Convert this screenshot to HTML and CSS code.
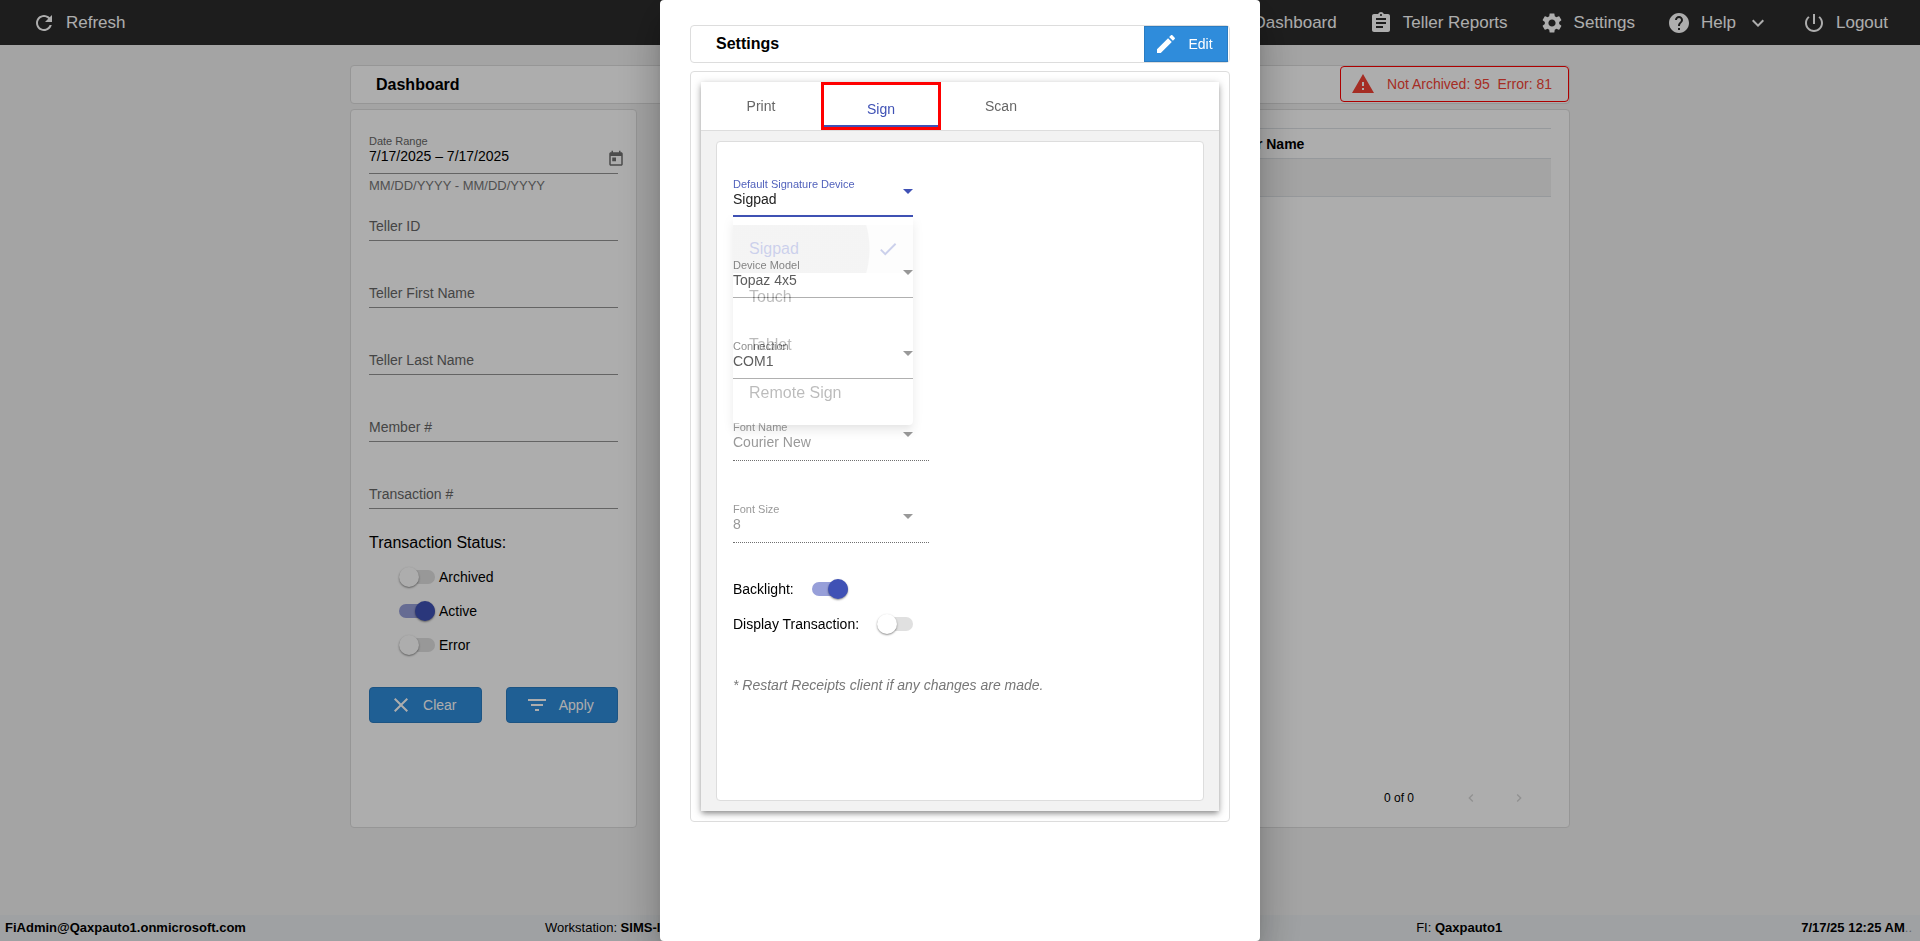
FILE: index.html
```html
<!DOCTYPE html>
<html lang="en">
<head>
<meta charset="utf-8">
<title>Receipts Dashboard</title>
<link rel="stylesheet" href="styles.css">
</head>
<body>
<div class="page">
  <header class="topbar">
    <button class="nav-item" type="button">
      <svg class="icon" viewBox="0 0 24 24"><path d="M17.65 6.35C16.2 4.9 14.21 4 12 4c-4.42 0-7.99 3.58-7.99 8s3.57 8 7.99 8c3.73 0 6.84-2.55 7.73-6h-2.08c-.82 2.33-3.04 4-5.65 4-3.31 0-6-2.69-6-6s2.69-6 6-6c1.66 0 3.14.69 4.22 1.78L13 11h7V4l-2.35 2.35z"/></svg>
      Refresh
    </button>
    <nav class="nav">
      <a class="nav-item" href="#">
        <svg class="icon" viewBox="0 0 24 24"><path d="M3 13h8V3H3v10zm0 8h8v-6H3v6zm10 0h8V11h-8v10zm0-18v6h8V3h-8z"/></svg>
        Dashboard
      </a>
      <a class="nav-item" href="#">
        <svg class="icon" viewBox="0 0 24 24"><path d="M19 3h-4.18C14.4 1.84 13.3 1 12 1c-1.3 0-2.4.84-2.82 2H5c-1.1 0-2 .9-2 2v14c0 1.1.9 2 2 2h14c1.1 0 2-.9 2-2V5c0-1.1-.9-2-2-2zm-7 0c.55 0 1 .45 1 1s-.45 1-1 1-1-.45-1-1 .45-1 1-1zm2 14H7v-2h7v2zm3-4H7v-2h10v2zm0-4H7V7h10v2z"/></svg>
        Teller Reports
      </a>
      <a class="nav-item" href="#">
        <svg class="icon" viewBox="0 0 24 24"><path d="M19.14 12.94c.04-.3.06-.61.06-.94 0-.32-.02-.64-.07-.94l2.03-1.58c.18-.14.23-.41.12-.61l-1.92-3.32c-.12-.22-.37-.29-.59-.22l-2.39.96c-.5-.38-1.03-.7-1.62-.94l-.36-2.54c-.04-.24-.24-.41-.48-.41h-3.84c-.24 0-.43.17-.47.41l-.36 2.54c-.59.24-1.13.57-1.62.94l-2.39-.96c-.22-.08-.47 0-.59.22L2.74 8.87c-.12.21-.08.47.12.61l2.03 1.58c-.05.3-.09.63-.09.94s.02.64.07.94l-2.03 1.58c-.18.14-.23.41-.12.61l1.92 3.32c.12.22.37.29.59.22l2.39-.96c.5.38 1.03.7 1.62.94l.36 2.54c.05.24.24.41.48.41h3.84c.24 0 .44-.17.47-.41l.36-2.54c.59-.24 1.13-.56 1.62-.94l2.39.96c.22.08.47 0 .59-.22l1.92-3.32c.12-.22.07-.47-.12-.61l-2.01-1.58zM12 15.6c-1.98 0-3.6-1.62-3.6-3.6s1.62-3.6 3.6-3.6 3.6 1.62 3.6 3.6-1.62 3.6-3.6 3.6z"/></svg>
        Settings
      </a>
      <button class="nav-item" type="button">
        <svg class="icon" viewBox="0 0 24 24"><path d="M12 2C6.48 2 2 6.48 2 12s4.48 10 10 10 10-4.48 10-10S17.52 2 12 2zm1 17h-2v-2h2v2zm2.07-7.75l-.9.92C13.45 12.9 13 13.5 13 15h-2v-.5c0-1.1.45-2.1 1.17-2.83l1.24-1.26c.37-.36.59-.86.59-1.41 0-1.1-.9-2-2-2s-2 .9-2 2H8c0-2.21 1.79-4 4-4s4 1.79 4 4c0 .88-.36 1.68-.93 2.25z"/></svg>
        Help
        <svg class="icon" viewBox="0 0 24 24"><path d="M16.59 8.59L12 13.17 7.41 8.59 6 10l6 6 6-6z"/></svg>
      </button>
      <a class="nav-item" href="#">
        <svg class="icon" viewBox="0 0 24 24"><path d="M13 3h-2v10h2V3zm4.83 2.17l-1.42 1.42C17.99 7.86 19 9.81 19 12c0 3.87-3.13 7-7 7s-7-3.13-7-7c0-2.19 1.01-4.14 2.58-5.42L6.17 5.17C4.23 6.82 3 9.26 3 12c0 4.97 4.03 9 9 9s9-4.03 9-9c0-2.74-1.23-5.18-3.17-6.83z"/></svg>
        Logout
      </a>
    </nav>
  </header>

  <main class="main">
    <section class="title-bar">
      <h1 class="title">Dashboard</h1>
      <div class="alert">
        <svg class="icon" viewBox="0 0 24 24"><path d="M1 21h22L12 2 1 21zm12-3h-2v-2h2v2zm0-4h-2v-4h2v4z"/></svg>
        <span>Not Archived: 95&nbsp; Error: 81</span>
      </div>
    </section>

    <div class="columns">
      <form class="card filters">
        <div class="date-field">
          <label class="small-label" for="range">Date Range</label>
          <div class="date-line">
            <input class="line-input" id="range" type="text" value="7/17/2025 – 7/17/2025">
            <button class="date-button" type="button" aria-label="Open calendar">
              <svg class="icon-small" viewBox="0 0 24 24"><path d="M19 3h-1V1h-2v2H8V1H6v2H5c-1.11 0-1.99.9-1.99 2L3 19c0 1.1.89 2 2 2h14c1.1 0 2-.9 2-2V5c0-1.1-.9-2-2-2zm0 16H5V8h14v11zM7 10h5v5H7z"/></svg>
            </button>
          </div>
          <p class="hint">MM/DD/YYYY - MM/DD/YYYY</p>
        </div>
        <div class="empty-fields">
          <div class="empty-field"><label for="teller-id">Teller ID</label><input id="teller-id" type="text"></div>
          <div class="empty-field"><label for="first-name">Teller First Name</label><input id="first-name" type="text"></div>
          <div class="empty-field"><label for="last-name">Teller Last Name</label><input id="last-name" type="text"></div>
          <div class="empty-field"><label for="member">Member #</label><input id="member" type="text"></div>
          <div class="empty-field"><label for="transaction">Transaction #</label><input id="transaction" type="text"></div>
        </div>
        <fieldset class="status">
          <legend class="status-title">Transaction Status:</legend>
          <label class="status-row"><input class="toggle" type="checkbox">Archived</label>
          <label class="status-row"><input class="toggle" type="checkbox" checked>Active</label>
          <label class="status-row"><input class="toggle" type="checkbox">Error</label>
        </fieldset>
        <div class="actions">
          <button class="button" type="button">
            <svg class="icon" viewBox="0 0 24 24"><path d="M19 6.41L17.59 5 12 10.59 6.41 5 5 6.41 10.59 12 5 17.59 6.41 19 12 13.41 17.59 19 19 17.59 13.41 12z"/></svg>
            Clear
          </button>
          <button class="button" type="button">
            <svg class="icon" viewBox="0 0 24 24"><path d="M10 18h4v-2h-4v2zM3 6v2h18V6H3zm3 7h12v-2H6v2z"/></svg>
            Apply
          </button>
        </div>
      </form>

      <section class="card results">
        <table class="table">
          <thead><tr><th class="col-id">Teller ID</th><th>Teller Name</th></tr></thead>
          <tbody><tr><td></td><td></td></tr></tbody>
        </table>
        <div class="paginator">
          <span>0 of 0</span>
          <div class="pages">
            <button class="page-button" type="button" aria-label="Previous page" disabled>
              <svg class="icon-tiny" viewBox="0 0 24 24"><path d="M15.41 7.41L14 6l-6 6 6 6 1.41-1.41L10.83 12z"/></svg>
            </button>
            <button class="page-button" type="button" aria-label="Next page" disabled>
              <svg class="icon-tiny" viewBox="0 0 24 24"><path d="M10 6L8.59 7.41 13.17 12l-4.58 4.59L10 18l6-6z"/></svg>
            </button>
          </div>
        </div>
      </section>
    </div>
  </main>

  <footer class="footer">
    <strong>FiAdmin@Qaxpauto1.onmicrosoft.com</strong>
    <span class="station">Workstation: <strong>SIMS-IT</strong></span>
    <span>FI: <strong>Qaxpauto1</strong></span>
    <span><strong>7/17/25 12:25 AM</strong><span class="trail">..</span></span>
  </footer>
</div>

<div class="backdrop">
  <div class="dialog" role="dialog" aria-labelledby="dialog-title">
    <div class="title-bar">
      <h2 class="title" id="dialog-title">Settings</h2>
      <button class="button edit" type="button">
        <svg class="icon" viewBox="0 0 24 24"><path d="M3 17.25V21h3.75L17.81 9.94l-3.75-3.75L3 17.25zM20.71 7.04c.39-.39.39-1.02 0-1.41l-2.34-2.34c-.39-.39-1.02-.39-1.41 0l-1.83 1.83 3.75 3.75 1.83-1.83z"/></svg>
        Edit
      </button>
    </div>
    <div class="card dialog-card">
      <div class="tab-panel">
        <div class="tabs" role="tablist">
          <button class="tab" type="button" role="tab">Print</button>
          <button class="tab tab-active" type="button" role="tab" aria-selected="true">Sign</button>
          <button class="tab" type="button" role="tab">Scan</button>
        </div>
        <div class="tab-body">
          <div class="card sign-card">
            <div class="fields">
              <div class="field field-active">
                <label class="small-label" for="device">Default Signature Device</label>
                <select id="device"><option>Sigpad</option><option>Touch</option><option>Tablet</option><option>Remote Sign</option></select>
                <ul class="menu" role="listbox">
                  <li class="menu-item menu-selected" role="option" aria-selected="true">Sigpad
                    <svg class="icon-check" viewBox="0 0 24 24"><path d="M9 16.17L4.83 12l-1.42 1.41L9 19 21 7l-1.41-1.41z"/></svg>
                  </li>
                  <li class="menu-item" role="option">Touch</li>
                  <li class="menu-item" role="option">Tablet</li>
                  <li class="menu-item" role="option">Remote Sign</li>
                </ul>
              </div>
              <div class="field">
                <label class="small-label" for="model">Device Model</label>
                <select id="model"><option>Topaz 4x5</option></select>
              </div>
              <div class="field">
                <label class="small-label" for="connection">Connection</label>
                <select id="connection"><option>COM1</option></select>
              </div>
              <div class="field field-disabled">
                <label class="small-label" for="font-name">Font Name</label>
                <select id="font-name" disabled><option>Courier New</option></select>
              </div>
              <div class="field field-disabled">
                <label class="small-label" for="font-size">Font Size</label>
                <select id="font-size" disabled><option>8</option></select>
              </div>
            </div>
            <div class="switches">
              <label class="switch-row">Backlight: <input class="toggle" type="checkbox" checked></label>
              <label class="switch-row">Display Transaction: <input class="toggle" type="checkbox"></label>
            </div>
            <p class="note">* Restart Receipts client if any changes are made.</p>
          </div>
        </div>
      </div>
    </div>
  </div>
</div>
</body>
</html>
```

FILE: styles.css
```css
* { box-sizing: border-box; }

body {
  margin: 0;
  font: 14px/16px "Liberation Sans", Arial, sans-serif;
  color: #000;
  background: #f2f2f2;
}

button, input, select { font: inherit; color: inherit; margin: 0; }
button { border: 0; background: none; padding: 0; }
a { color: inherit; text-decoration: none; }

.icon { width: 24px; height: 24px; flex: none; fill: currentColor; }
.icon-small { width: 18px; height: 18px; fill: currentColor; display: block; }
.icon-tiny { width: 16px; height: 16px; fill: currentColor; }
.icon-check { width: 22px; height: 22px; fill: currentColor; }

.page { min-height: 100vh; display: flex; flex-direction: column; }

/* Top bar */
.topbar {
  display: flex;
  justify-content: space-between;
  align-items: center;
  height: 45px;
  padding: 0 32px;
  background: #2c2c2c;
  color: #fff;
  font-size: 17px;
}
.nav { display: flex; gap: 32px; }
.nav-item { display: flex; align-items: center; gap: 10px; }

/* Shared boxes */
.main {
  flex: 1;
  display: flex;
  flex-direction: column;
  gap: 5px;
  width: 100%;
  max-width: 1220px;
  margin: 0 auto;
  padding: 20px 0 87px;
}
.card, .title-bar { background: #fff; border: 1px solid #ddd; border-radius: 4px; }
.title-bar {
  display: flex;
  justify-content: space-between;
  align-items: center;
  padding-left: 25px;
}
.main .title-bar { height: 39px; align-items: flex-start; }
.title { margin: 0; font-size: 16px; line-height: 36px; font-weight: bold; }
.main .title { line-height: 38px; }
.alert {
  display: flex;
  align-items: center;
  gap: 12px;
  height: 36px;
  padding: 0 16px 0 10px;
  border: 1px solid #f00;
  border-radius: 4px;
  color: #f44336;
}
.columns { flex: 1; display: flex; gap: 32px; }

/* Filters */
.filters { width: 287px; padding: 24px 18px; }
.small-label { display: block; font-size: 11px; line-height: 14px; color: #666; }
.date-line {
  display: flex;
  align-items: flex-start;
  height: 26px;
  border-bottom: 1px solid #949494;
}
.line-input { flex: 1; min-width: 0; height: 16px; padding: 0; border: 0; background: none; }
.date-button { margin: 2px -7px 0 0; color: #707070; }
.hint { margin: 4px 0 0; font-size: 13px; color: #777; }
.empty-fields { display: grid; gap: 43px; margin-top: 23px; }
.empty-field { display: grid; height: 24px; border-bottom: 1px solid #949494; color: #666; }
.empty-field label, .empty-field input { grid-area: 1 / 1; }
.empty-field label { line-height: 18px; pointer-events: none; }
.empty-field input { width: 100%; border: 0; padding: 0; background: none; }
.status { margin: 24px 0 0; padding: 0; border: 0; }
.status-title { padding: 0 0 7px; font-size: 16px; line-height: 20px; }
.status-row { display: flex; align-items: center; gap: 4px; height: 34px; padding-left: 30px; }
.actions { display: grid; grid-template-columns: 1fr 1fr; gap: 24px; margin-top: 25px; }
.button {
  display: flex;
  align-items: center;
  justify-content: center;
  gap: 10px;
  height: 36px;
  padding-right: 5px;
  background: #2f8cdb;
  border: 1px solid #2a7cc2;
  border-radius: 4px;
  color: #fff;
}

/* Toggle switch */
.toggle {
  appearance: none;
  position: relative;
  width: 36px;
  height: 14px;
  border-radius: 7px;
  background: #e0e0e0;
}
.toggle::before {
  content: "";
  position: absolute;
  top: -3px;
  left: 0;
  width: 20px;
  height: 20px;
  border-radius: 50%;
  background: #fff;
  box-shadow: 0 1px 2px rgba(0, 0, 0, .45);
}
.toggle:checked { background: #979fd9; }
.toggle:checked::before { left: auto; right: 0; background: #3f51b5; }

/* Results */
.results {
  flex: 1;
  display: flex;
  flex-direction: column;
  justify-content: space-between;
  padding: 18px 18px 5px;
}
.table { width: 100%; border-collapse: collapse; table-layout: fixed; }
.table tr { border-top: 1px solid #dee2e6; border-bottom: 1px solid #dee2e6; }
.table th { height: 30px; padding: 0 3px; text-align: left; }
.table td { height: 38px; background: #f2f2f2; }
.col-id { width: 62%; }
.paginator {
  display: flex;
  justify-content: flex-end;
  align-items: center;
  gap: 33px;
  height: 48px;
  padding-right: 8px;
  font-size: 12px;
}
.pages { display: flex; }
.page-button { display: grid; place-items: center; width: 48px; height: 48px; color: #d5d5d5; }

/* Footer */
.footer {
  display: flex;
  justify-content: space-between;
  align-items: center;
  height: 26px;
  padding: 0 8px 0 5px;
  background: #ebeef0;
  font-size: 13px;
}
.station { width: 30%; }
.trail { color: #999; }

/* Dialog */
.backdrop {
  position: fixed;
  inset: 0;
  display: flex;
  justify-content: center;
  background: rgba(0, 0, 0, .32);
}
.dialog {
  display: flex;
  flex-direction: column;
  gap: 8px;
  width: 600px;
  padding: 25px 30px 119px;
  background: #fff;
  border-radius: 4px;
  box-shadow: 0 11px 15px -7px rgba(0, 0, 0, .2), 0 24px 38px 3px rgba(0, 0, 0, .14), 0 9px 46px 8px rgba(0, 0, 0, .12);
}
.edit { width: 84px; margin-right: 1px; border-radius: 0; }
.dialog-card { flex: 1; display: flex; padding: 10px; }
.tab-panel {
  flex: 1;
  display: flex;
  flex-direction: column;
  background: #f2f2f2;
  box-shadow: 0 3px 5px -1px rgba(0, 0, 0, .3), 0 2px 8px rgba(0, 0, 0, .25);
}
.tabs { display: flex; background: #fff; border-bottom: 1px solid #ddd; }
.tab { width: 120px; height: 48px; color: #666; }
.tab-active {
  padding-top: 6px;
  border: 3px solid #f00;
  box-shadow: inset 0 -2px #3f51b5;
  color: #3f51b5;
}
.tab-body { flex: 1; display: flex; padding: 10px 15px; }
.sign-card { flex: 1; padding: 35px 16px; }
.fields { display: grid; gap: 41px; justify-items: start; }
.field { position: relative; width: 180px; height: 40px; border-bottom: 1px solid #949494; }
.field::after {
  content: "";
  position: absolute;
  top: 12px;
  left: 170px;
  border: 5px solid transparent;
  border-top-color: #757575;
  border-bottom: 0;
}
.field select {
  appearance: none;
  display: block;
  width: 100%;
  height: 16px;
  padding: 0;
  border: 0;
  background: none;
  color: #222;
  opacity: 1;
}
.field-active { border-bottom: 2px solid #3f51b5; }
.field-active .small-label { color: #5262bc; }
.field-active::after { border-top-color: #3f51b5; }
.field-disabled { width: 196px; height: 41px; border-bottom: 1px dotted #707070; }
.field-disabled .small-label, .field-disabled select { color: #999; }
.field-disabled::after { border-top-color: #999; }

.menu {
  position: absolute;
  z-index: 1;
  top: 100%;
  left: 0;
  width: 180px;
  margin: 2px 0 0;
  padding: 8px 0;
  list-style: none;
  background: #fff;
  border-radius: 0 0 4px 4px;
  box-shadow: 0 5px 5px -3px rgba(0, 0, 0, .2), 0 8px 10px 1px rgba(0, 0, 0, .14), 0 3px 14px 2px rgba(0, 0, 0, .12);
  font-size: 16px;
  opacity: .27;
}
.menu-item { display: flex; align-items: center; justify-content: space-between; height: 48px; padding: 0 14px 0 16px; }
.menu-selected {
  color: #3f51b5;
  background: radial-gradient(circle at 49px 50%, rgba(0, 0, 0, .12) 87px, transparent 88px) #f5f5f5;
}

.switches { margin-top: 28px; }
.switch-row { display: flex; align-items: center; gap: 18px; height: 35px; }
.note { margin: 34px 0 0; line-height: 20px; font-style: italic; color: #777; }
```
